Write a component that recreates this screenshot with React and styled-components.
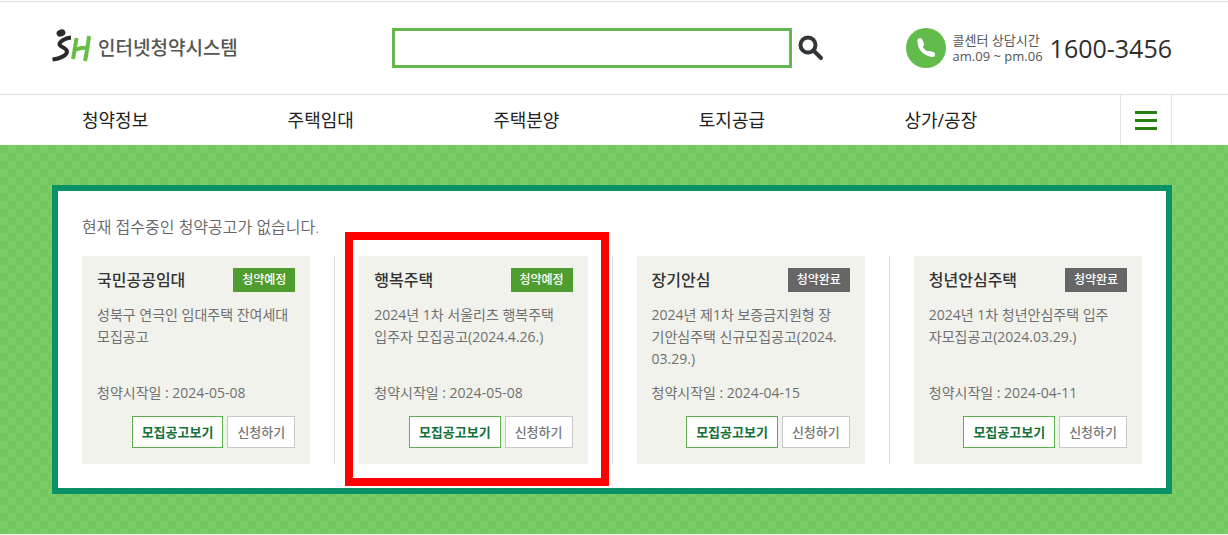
import React from "react";
import styled, { createGlobalStyle } from "styled-components";

const Global = createGlobalStyle`
  *, *::before, *::after { box-sizing: border-box; }
  body {
    margin: 0;
    background: #fff;
    color: #333;
    font-family: "Open Sans", "Noto Sans CJK KR", sans-serif;
    font-size: 14px;
    line-height: 22px;
  }
  h1, h2, h3, p, ul { margin: 0; padding: 0; }
  button, input { font: inherit; }
  a { color: inherit; text-decoration: none; }
`;

const Container = styled.div`
  padding: 0 56px 0 52px;
`;

const Header = styled.header`
  margin-top: 1px;
  border-top: 1px solid #e0e0e0;
  border-bottom: 1px solid #e0e0e0;
`;

const HeaderRow = styled(Container)`
  display: grid;
  grid-template-columns: 1fr auto 1fr;
  align-items: center;
  height: 92px;
`;

const Logo = styled.a`
  display: flex;
  align-items: center;
  gap: 6px;
  color: #555652;
  font-size: 19px;
  font-weight: 500;
  white-space: nowrap;
`;

const Search = styled.form`
  display: flex;
  align-items: center;
`;

const SearchInput = styled.input`
  width: 400px;
  height: 40px;
  padding: 0 10px;
  border: 3px solid #67b652;
  border-radius: 0;
  background: #fff;
  outline: 0;
`;

const SearchButton = styled.button`
  display: flex;
  width: 40px;
  height: 40px;
  align-items: center;
  padding: 0 0 0 6px;
  border: 0;
  background: none;
  cursor: pointer;
`;

const CallCenter = styled.div`
  display: flex;
  align-items: center;
  justify-content: flex-end;
  gap: 7px;
  white-space: nowrap;
`;

const CallHours = styled.p`
  color: #555;
  font-size: 13px;
  line-height: 16px;
`;

const CallNumber = styled.a`
  color: #2e2e2e;
  font-size: 25px;
  line-height: 32px;
`;

const NavRow = styled(Container)`
  display: flex;
  height: 50px;
`;

const NavList = styled.ul`
  display: grid;
  flex: 1;
  grid-template-columns: repeat(5, 1fr);
  align-items: center;
  margin-right: 40px;
  list-style: none;
`;

const NavLink = styled.a`
  padding-left: 30px;
  color: #222;
  font-size: 18px;
  line-height: 24px;
  white-space: nowrap;
`;

const MenuButton = styled.button`
  display: flex;
  width: 52px;
  flex-direction: column;
  align-items: center;
  justify-content: center;
  gap: 5px;
  padding: 0;
  border: 1px solid #e3e3e3;
  border-width: 0 1px;
  background: #fff;
  cursor: pointer;
`;

const MenuBar = styled.span`
  width: 22px;
  height: 3px;
  background: #218010;
`;

const Hero = styled.main`
  padding: 40px 56px 40px 52px;
  background: conic-gradient(#7bce67 25%, #74c660 0 50%, #7bce67 0 75%, #74c660 0) 0 0 / 16px 16px;
`;

const Panel = styled.section`
  padding: 24px;
  border: 6px solid #0a9165;
  background: #fff;
`;

const Notice = styled.p`
  margin-bottom: 17px;
  color: #666;
  font-size: 16px;
  font-weight: 350;
  line-height: 24px;
`;

const CardRow = styled.div`
  display: flex;
  gap: 24px;
`;

const Divider = styled.span`
  width: 1px;
  background: #dcdcdc;
`;

const Card = styled.article`
  position: relative;
  flex: 1 1 0;
  min-width: 0;
  padding: 12px 15px 16px;
  background: #f1f2ec;
`;

const Highlight = styled.span`
  position: absolute;
  inset: -24px -21px -22px -14px;
  border: 8px solid #f00;
  pointer-events: none;
`;

const CardHead = styled.div`
  display: flex;
  align-items: center;
  justify-content: space-between;
  margin-bottom: 12px;
`;

const CardTitle = styled.h2`
  color: #333;
  font-size: 16px;
  font-weight: 500;
  line-height: 24px;
  white-space: nowrap;
`;

const Badge = styled.span`
  width: 62px;
  background: ${(p) => (p.$done ? "#666" : "#509d2f")};
  color: #fff;
  font-size: 12px;
  font-weight: 500;
  line-height: 24px;
  text-align: center;
`;

const Description = styled.p`
  min-height: 66px;
  margin-bottom: 12px;
  color: #707070;
  white-space: pre-line;
`;

const StartDate = styled.p`
  margin-bottom: 12px;
  color: #707070;
`;

const Actions = styled.div`
  display: flex;
  justify-content: flex-end;
  gap: 4px;
`;

const ActionButton = styled.button`
  height: 32px;
  padding: 0 9px;
  border: 1px solid ${(p) => (p.$primary ? "#5db14c" : "#c8c8c8")};
  background: #fff;
  color: ${(p) => (p.$primary ? "#14703a" : "#777")};
  font-size: 13px;
  font-weight: ${(p) => (p.$primary ? 700 : 500)};
  white-space: nowrap;
  cursor: pointer;
`;

const menu = ["청약정보", "주택임대", "주택분양", "토지공급", "상가/공장"];

const notices = [
  { title: "국민공공임대", status: "청약예정", text: "성북구 연극인 임대주택 잔여세대\n모집공고", date: "2024-05-08" },
  { title: "행복주택", status: "청약예정", text: "2024년 1차 서울리츠 행복주택\n입주자 모집공고(2024.4.26.)", date: "2024-05-08", highlighted: true },
  { title: "장기안심", status: "청약완료", done: true, text: "2024년 제1차 보증금지원형 장\n기안심주택 신규모집공고(2024.\n03.29.)", date: "2024-04-15" },
  { title: "청년안심주택", status: "청약완료", done: true, text: "2024년 1차 청년안심주택 입주\n자모집공고(2024.03.29.)", date: "2024-04-11" },
];

const LogoMark = () => (
  <svg width="40" height="38" viewBox="0 0 40 38" fill="none" aria-hidden="true">
    <ellipse cx="9" cy="4" rx="4.5" ry="3.5" transform="rotate(-20 9 4)" fill="#2b2929" />
    <path d="M19 8.500C14 9 8 12 7.500 15c-.5 3 7.500 3.500 7.500 7.500 0 4-7 7-14.500 8" stroke="#2b2929" strokeWidth="4" />
    <path d="M24.500 9c-1 7-2 14-3.500 21M37 7c-1 8-2 16-4 25M21 21.500c5-2 9-3 14-3" stroke="#67bd45" strokeWidth="4" />
  </svg>
);

const SearchIcon = () => (
  <svg width="26" height="26" viewBox="0 0 26 26" fill="none" stroke="#333638" aria-hidden="true">
    <circle cx="10" cy="10" r="7.500" strokeWidth="4" />
    <path d="m15.500 15.500 7.500 7.500" strokeWidth="4" strokeLinecap="round" />
  </svg>
);

const PhoneIcon = () => (
  <svg width="40" height="40" viewBox="0 0 40 40" fill="none" aria-hidden="true">
    <circle cx="20" cy="20" r="20" fill="#63bb4c" />
    <path d="M13.500 13.500c0 7 5.500 13 13 13" stroke="#fff" strokeWidth="4" strokeLinecap="round" />
    <path d="m14 12.500 1.500 4M23 25.500l3.500 1" stroke="#fff" strokeWidth="5" strokeLinecap="round" />
  </svg>
);

export default function App() {
  return (
    <>
      <Global />
      <Header>
        <HeaderRow>
          <Logo href="#home">
            <LogoMark />
            인터넷청약시스템
          </Logo>
          <Search role="search" onSubmit={(e) => e.preventDefault()}>
            <SearchInput type="text" aria-label="검색어" />
            <SearchButton type="submit" aria-label="검색">
              <SearchIcon />
            </SearchButton>
          </Search>
          <CallCenter>
            <PhoneIcon />
            <CallHours>
              콜센터 상담시간
              <br />
              am.09 ~ pm.06
            </CallHours>
            <CallNumber href="tel:1600-3456">1600-3456</CallNumber>
          </CallCenter>
        </HeaderRow>
      </Header>
      <nav>
        <NavRow>
          <NavList>
            {menu.map((item) => (
              <li key={item}>
                <NavLink href="#menu">{item}</NavLink>
              </li>
            ))}
          </NavList>
          <MenuButton type="button" aria-label="전체메뉴">
            <MenuBar />
            <MenuBar />
            <MenuBar />
          </MenuButton>
        </NavRow>
      </nav>
      <Hero>
        <Panel>
          <Notice>현재 접수중인 청약공고가 없습니다.</Notice>
          <CardRow>
            {notices.map((n, i) => (
              <React.Fragment key={n.title}>
                {i > 0 && <Divider />}
                <Card>
                  <CardHead>
                    <CardTitle>{n.title}</CardTitle>
                    <Badge $done={n.done}>{n.status}</Badge>
                  </CardHead>
                  <Description>{n.text}</Description>
                  <StartDate>청약시작일 : {n.date}</StartDate>
                  <Actions>
                    <ActionButton type="button" $primary>모집공고보기</ActionButton>
                    <ActionButton type="button">신청하기</ActionButton>
                  </Actions>
                  {n.highlighted && <Highlight />}
                </Card>
              </React.Fragment>
            ))}
          </CardRow>
        </Panel>
      </Hero>
    </>
  );
}
